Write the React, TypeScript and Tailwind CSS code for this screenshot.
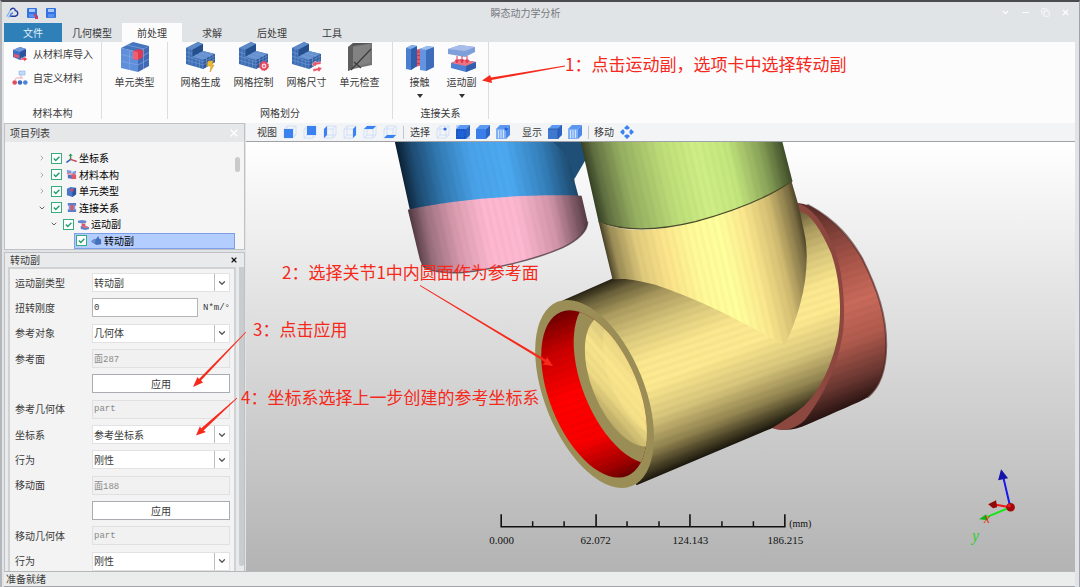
import { useState, type ReactNode } from "react";
import { ChevronDown, ChevronRight, Copy, Minus, X } from "lucide-react";

type Face = "front" | "back" | "left" | "right" | "top" | "bottom";

const FACES: Record<Face, string> = {
  front: "M1 4h9v9H1z",
  back: "M4 1h9v9H4z",
  left: "M1 4l3-3v9l-3 3z",
  right: "M10 4l3-3v9l-3 3z",
  top: "M1 4l3-3h9l-3 3z",
  bottom: "M1 13l3-3h9l-3 3z",
};

function WireCube({ face, dot }: { face?: Face; dot?: boolean }) {
  return (
    <svg viewBox="0 0 14 14" className="size-[14px]" aria-hidden="true">
      <path d="M1 4h9v9H1zM4 1h9v9H4zM1 4l3-3M10 4l3-3M1 13l3-3M10 13l3-3" fill="none" stroke="#c9dcfb" strokeWidth=".8" />
      {face && <path d={FACES[face]} fill="#3b82f0" />}
      {dot && <circle cx="9" cy="4" r="1.6" fill="#2f6fe0" />}
    </svg>
  );
}

function SolidCube({ kind }: { kind: "volume" | "plain" | "part" | "shaded" | "edges" }) {
  const light = kind === "part" || kind === "edges";
  const base = kind === "volume" ? "#1f62d8" : light ? "#7fb0f5" : kind === "shaded" ? "#3f78cf" : "#3b7eea";
  return (
    <svg viewBox="0 0 14 14" className="size-[14px]" aria-hidden="true">
      {kind === "volume" && <path d="M0 0h14v14H0z" fill="#b9d2f8" />}
      <path d="M0 4h10v10H0z" fill={base} />
      <path d="M0 4l4-4h10l-4 4z" fill={light ? "#5b97ee" : "#5b98f2"} />
      <path d="M10 4l4-4v10l-4 4z" fill={light ? "#4a87e6" : "#2a63c4"} />
      {light && <path d="M2.500 5v8M5 5v8M7.500 5v8" stroke="#d3e4fc" strokeWidth="1" />}
      {kind === "volume" && <path d="M1 5h8v8H1z" fill="none" stroke="#0d3f9c" strokeWidth=".8" strokeDasharray="1 1" />}
      {kind === "part" && <circle cx="10" cy="4" r="1.500" fill="#1f5fd0" />}
      {kind === "shaded" && <path d="M0 4h10v10M10 4l4-4" fill="none" stroke="#234f96" strokeWidth=".7" />}
    </svg>
  );
}

function MoveIcon() {
  return (
    <svg viewBox="0 0 14 14" className="size-[14px]" aria-hidden="true" fill="#3b82f0">
      <path d="M7 0l3 3-2 1.500H6L4 3zM7 14l3-3-2-1.500H6L4 11zM0 7l3-3 1.500 2v2L3 10zM14 7l-3-3-1.500 2v2l1.500 2z" />
    </svg>
  );
}

function ElementTypeIcon() {
  return (
    <svg viewBox="0 0 30 30" className="size-[30px]" aria-hidden="true">
      <path d="M1 6L13 0l16 4-11 6z" fill="#4475bd" />
      <path d="M1 6l17 4v20L1 26z" fill="#5f8edb" />
      <path d="M18 10l11-6v20l-11 6z" fill="#4169b4" />
      <path d="M1 12.500l17 4 11-6M1 19l17 4 11-6M9.500 8v20M23.500 7v20M7 3l17 4" stroke="#83a8e4" strokeWidth=".7" fill="none" />
      <path d="M13 9l5-2 5 1.200v7L18 18l-5-1z" fill="#d93c54" />
      <path d="M13 9l5 1v8l-5-1z" fill="#f2606f" />
    </svg>
  );
}

function MeshIcon({ badge }: { badge: "bolt" | "gear" | "size" }) {
  return (
    <svg viewBox="0 0 30 30" className="size-[30px]" aria-hidden="true">
      <path d="M0 6L12 0l5 2v7l12 3v8l-12 7L0 22z" fill="#3c6db2" />
      <path d="M0 6L12 0l5 2L6 8z" fill="#5d8ac8" />
      <path d="M6 8l11-6v7L6 15z" fill="#264f8d" />
      <path d="M6 15l11-6 12 3-12 6z" fill="#6792d0" />
      <path d="M17 18l12-6v8l-12 7z" fill="#2c5799" />
      <path d="M0 10l6 2M0 14l6 2 11 4 12-6M0 18l17 5 12-6M3 7v15M6 8v15M10 17v8M13.500 18v8M17 18v9M20.500 16v9M24 14v9M27 13v8M9 13l12 4M13 11l12 3" stroke="#7ea3d9" strokeWidth=".5" fill="none" />
      {badge === "bolt" && <path d="M22 19h5l-1 4h2l-4 7 1-6h-4z" fill="#efb92e" stroke="#c88d15" strokeWidth=".5" />}
      {badge === "gear" && (
        <g>
          <circle cx="25" cy="24" r="3.400" fill="#fbd6dc" stroke="#e5485f" strokeWidth="2" />
          <circle cx="25" cy="24" r="4.500" fill="none" stroke="#e5485f" strokeWidth="1" strokeDasharray="1.600 1.200" />
          <circle cx="25" cy="24" r="1" fill="#e5485f" />
        </g>
      )}
      {badge === "size" && (
        <g fill="#ec5367" stroke="#fff" strokeWidth=".4">
          <path d="M20 23l3-4 1 1.500 5-1v2.500l-5 1v1.500zM30 26l-3 4-1-1.500-5 1V27l5-1v-1.500z" />
        </g>
      )}
    </svg>
  );
}

function CheckElementIcon() {
  return (
    <svg viewBox="0 0 30 30" className="size-[30px]" aria-hidden="true">
      <path d="M3 5L8 1h19l-2 3z" fill="#555" />
      <path d="M3 5l5-1 19-3v22l-19 4-5 2z" fill="#757575" />
      <path d="M3 5l5-1v22l-5 3z" fill="#5e5e5e" />
      <path d="M8 5l17-3v19L8 25z" fill="#828282" />
      <path d="M6 28L26 7M9 20l7 6" stroke="#3d3d3d" strokeWidth="1.200" fill="none" />
    </svg>
  );
}

function ContactIcon() {
  return (
    <svg viewBox="0 0 30 30" className="size-[30px]" aria-hidden="true">
      <path d="M10 8l8-2v17l-8 2z" fill="#e35a6c" />
      <path d="M10 9l8 2M10 13l8 1M10 17l8 1M10 21l8 1" stroke="#b92f4a" strokeWidth=".8" />
      <path d="M1 6l6-3 5 1v20l-6 4-5-1z" fill="#4a7fd0" />
      <path d="M6 7l6-3v20l-6 4z" fill="#2e5da9" />
      <path d="M1 6l6-3 5 1-6 3z" fill="#86afe9" />
      <path d="M15 7l7-3 7 1v20l-8 4-6-1z" fill="#6394df" />
      <path d="M21 8l8-3v20l-8 4z" fill="#3c6cba" />
      <path d="M15 7l7-3 7 1-8 3z" fill="#9abdf0" />
    </svg>
  );
}

function JointIcon() {
  return (
    <svg viewBox="0 0 30 30" className="size-[30px]" aria-hidden="true">
      <path d="M1 7l12-4 15 2v5l-10 5L1 12z" fill="#7f9fdb" />
      <path d="M1 7l12-4 15 2-10 4z" fill="#a9bdea" />
      <path d="M4 21l9-4 16 3v6l-10 4-15-4z" fill="#4d80d3" />
      <path d="M4 21l9-4 16 3-10 4z" fill="#ec7482" />
      <path d="M19 24l10-4v6l-10 4z" fill="#315fae" />
      <path d="M10 14v5M15 14v5M20 14v5M8.500 18h3L10 21zM13.500 18h3L15 21zM18.500 18h3L20 21z" stroke="#e23750" fill="#e23750" strokeWidth="1" />
    </svg>
  );
}

function ImportMaterialIcon() {
  return (
    <svg viewBox="0 0 16 16" className="size-[16px]" aria-hidden="true">
      <path d="M1 4l7-3 6 2v7l-6 4-7-3z" fill="#3f6fc2" />
      <path d="M1 4l7-3 6 2-6 3z" fill="#6f98dc" />
      <path d="M8 6l6-3v7l-6 4z" fill="#2c549d" />
      <path d="M2 8l5 1v3l-5-1z" fill="#ee5468" />
      <path d="M9 12h3v-1.500l3.500 2.500-3.500 2.500V14H9z" fill="#ea4258" stroke="#fff" strokeWidth=".4" />
    </svg>
  );
}

function CustomMaterialIcon() {
  return (
    <svg viewBox="0 0 16 16" className="size-[16px]" aria-hidden="true">
      <path d="M7 1h6v4H7z" fill="#c3dbf8" stroke="#85b2ea" strokeWidth=".6" />
      <path d="M9 5v3M3 10l1-2h7" stroke="#ef9aa2" strokeWidth=".8" fill="none" />
      <circle cx="2.700" cy="12.500" r="2.300" fill="#e4495c" />
      <circle cx="8" cy="12.500" r="2.300" fill="#3c6cc0" />
      <circle cx="13.300" cy="12.500" r="2.300" fill="#4a86d9" />
    </svg>
  );
}

function AppLogo() {
  return (
    <svg viewBox="0 0 14 14" className="size-[13px]" aria-hidden="true" fill="none" strokeLinecap="round">
      <path d="M1 11l4-7M3 12l4-5" stroke="#7db0ee" strokeWidth="1.300" />
      <path d="M5 4c2-3 5-1 5 1 3 0 4 5 0 6H5" stroke="#2438a0" strokeWidth="1.500" />
      <path d="M5 11c-1-1 0-3 2-3" stroke="#4d7fd6" strokeWidth="1.300" />
    </svg>
  );
}

function SaveIcon({ marked }: { marked?: boolean }) {
  return (
    <svg viewBox="0 0 12 12" className="size-[12px]" aria-hidden="true">
      <rect x="1" y="1" width="10" height="10" rx="1" fill="#3473e2" />
      <path d="M3 2h6v3H3z" fill="#a9c8fa" />
      <path d="M3 7h6v3.500H3z" fill="#5b90ef" />
      {marked && <path d="M8 7l3 4M11.500 8.500v3H9" stroke="#e4364b" strokeWidth="1.300" fill="none" />}
    </svg>
  );
}

type TreeKind = "axis" | "material" | "element" | "link" | "joint" | "revolute";

function TreeIcon({ kind }: { kind: TreeKind }) {
  return (
    <svg viewBox="0 0 12 12" className="size-[11px] shrink-0" aria-hidden="true">
      {kind === "axis" && (
        <g fill="none" strokeWidth="1.600" strokeLinecap="round">
          <path d="M5 7V2" stroke="#2f9a50" />
          <path d="M5 7l-4 3" stroke="#2f5fb8" />
          <path d="M5 7l6 2" stroke="#c74a5c" />
          <path d="M3.500 3L5 1l1.500 2" stroke="#2f9a50" strokeWidth="1" />
        </g>
      )}
      {kind === "material" && (
        <g>
          <path d="M1 1l5 1v3l-5-1zM7 3l4-1v3l-4 1z" fill="#7c98d6" />
          <path d="M2 6l6 1v4l-6-1z" fill="#4b74c4" />
          <path d="M6 6h5v5H6z" fill="#e0576c" />
          <path d="M1 5l9 1" stroke="#e0576c" />
        </g>
      )}
      {kind === "element" && (
        <g>
          <path d="M1 3l4-2 6 1v7l-4 3-6-2z" fill="#4677c8" />
          <path d="M7 4l4-2v7l-4 3z" fill="#2c559e" />
          <path d="M5 3h3v3H5z" fill="#dc4860" />
        </g>
      )}
      {kind === "link" && (
        <g>
          <path d="M2 1h9v3H2zM2 8h9v3H2z" fill="#5a7fc9" />
          <path d="M3 4h7v4H3z" fill="#7d95cf" />
          <path d="M5 3h3v6H5z" fill="#df5169" />
        </g>
      )}
      {kind === "joint" && (
        <g>
          <path d="M0 2l4-1 5 1v2L5 5 0 4z" fill="#6487d0" />
          <path d="M4 5h4v3H4z" fill="#dc5269" />
          <path d="M3 8l4-1 5 2v2l-4 1-5-1z" fill="#5b7fcb" />
          <path d="M3 8l4-1 5 2-4 1z" fill="#df6d80" />
        </g>
      )}
      {kind === "revolute" && (
        <g>
          <path d="M0 7l4-3 1 1 3-4 1 3 2 1v5l-5 1-3-2z" fill="#4570bb" />
          <path d="M0 7l4-3 1 4-2 1z" fill="#6b8ed2" />
        </g>
      )}
    </svg>
  );
}

function RibbonButton({ icon, label, menu }: { icon: ReactNode; label: string; menu?: boolean }) {
  return (
    <button type="button" className="flex shrink-0 flex-col items-center">
      {icon}
      <span className="mt-[3px] leading-[14px]">{label}</span>
      {menu && (
        <svg viewBox="0 0 6 4" className="mt-[5px] h-[4px] w-[6px]" aria-hidden="true">
          <path d="M0 0h6L3 4z" fill="#333" />
        </svg>
      )}
    </button>
  );
}

function RibbonGroup({ label, width, children }: { label: string; width: string; children: ReactNode }) {
  return (
    <section className={`flex h-[77px] shrink-0 flex-col items-center justify-between border-r border-[#dcdddf] ${width}`}>
      <div className="flex w-full justify-center">{children}</div>
      <div className="h-[12px] leading-[12px]">{label}</div>
    </section>
  );
}

function TreeRow({ label, kind, indent, state, selected }: { label: string; kind: TreeKind; indent: string; state: "open" | "closed" | "leaf"; selected?: boolean }) {
  return (
    <li className={`flex items-center ${indent}`}>
      {state !== "leaf" && (
        <button type="button" aria-label={label} className="mr-[4px] flex w-[10px] shrink-0 justify-center">
          {state === "open" ? <ChevronDown size={8} strokeWidth={2.500} color="#444" /> : <ChevronRight size={8} color="#888" />}
        </button>
      )}
      <label className={`flex h-[16px] items-center ${selected ? "flex-1 border border-[#7c9fe6] bg-[#b3cdff] pl-[1px]" : ""}`}>
        <span className="grid shrink-0 place-items-center">
          <input type="checkbox" defaultChecked className="peer col-start-1 row-start-1 size-[11px] appearance-none border border-[#35ad7e] bg-white" />
          <svg viewBox="0 0 10 10" className="pointer-events-none invisible col-start-1 row-start-1 size-[9px] peer-checked:visible" aria-hidden="true">
            <path d="M2 5l2.200 2.200L8.200 3" fill="none" stroke="#1da06a" strokeWidth="1.500" />
          </svg>
        </span>
        <span className="ml-[4px] flex items-center gap-[2px]">
          <TreeIcon kind={kind} />
          {label}
        </span>
      </label>
    </li>
  );
}

function Row({ id, label, children }: { id?: string; label?: string; children: ReactNode }) {
  return (
    <div className="flex items-center px-[5px]">
      <label htmlFor={id} className="w-[77px] shrink-0">{label}</label>
      <div className="flex min-w-0 flex-1 items-center">{children}</div>
    </div>
  );
}

function SelectRow({ id, label, value }: { id: string; label: string; value: string }) {
  return (
    <Row id={id} label={label}>
      <div className="grid h-[19px] flex-1 grid-cols-[1fr_15px] border border-[#e2e2e2] bg-white">
        <select id={id} className="col-span-2 col-start-1 row-start-1 min-w-0 appearance-none bg-transparent pl-px leading-[16px] outline-none">
          <option>{value}</option>
        </select>
        <span className="pointer-events-none col-start-2 row-start-1 flex items-center justify-center border-l border-[#bdbdbd]">
          <ChevronDown size={10} strokeWidth={3} color="#555" />
        </span>
      </div>
    </Row>
  );
}

function ReadonlyRow({ id, label, value }: { id: string; label: string; value: string }) {
  return (
    <Row id={id} label={label}>
      <input id={id} readOnly defaultValue={value} className="h-[19px] w-full min-w-0 border border-[#e0e0e0] bg-[#f1f1f1] pl-[1px] font-['Liberation_Mono','Noto_Sans_CJK_SC',monospace] text-[9px] text-[#8a8a8a] outline-none" />
    </Row>
  );
}

function ApplyRow() {
  return (
    <Row>
      <button type="button" className="h-[19px] flex-1 border border-[#a9acb0] bg-white leading-[16px]">应用</button>
    </Row>
  );
}

const RIGHT_BAND = "M797 203C806 204 812 206 820 212C838 224 852 240 863 259C879 291 887 317 887 345C887 368 882 387 868 398C862 402 840 411 808 425C796 431 783 432 772 428L790 390L836 300Z";
const RIM = "M797 203C815 208 826 227 836 251C844 276 846 307 844 330C840 362 826 394 806 420C796 430 783 433 771 428L785 300Z";
const BODY = "M563 301L613 279L780 225L802 212C812 215 824 234 832 254C840 277 843 307 839 335C833 366 820 393 804 407C796 414 785 421 772 429L637 486Z";
const UPPER = "M599 222C625 234 660 232 700 221C740 210 770 197 792 181L799 205L806 238C809 258 807 282 801 304C796 322 791 335 785 346C740 320 695 298 655 285C639 281 626 278 613 280Z";
const GREEN = "M581 142H783L793 181C765 201 725 214 696 222C655 232 622 231 599 222Z";
const BLUE = "M395 142H553C560 148 566 154 570 163C573 171 575 178 575 182L579 197C510 195 455 201 410 210Z";
const PINK = "M408 210C452 200 520 194 582 196L588 222C588 232 577 241 563 248C538 259 494 270 463 273C446 274 426 272 422 265L420 260Z";

function Model() {
  return (
    <svg viewBox="246 142 830 430" preserveAspectRatio="xMidYMid slice" className="h-full w-full" role="img">
      <defs>
        <linearGradient id="body" gradientUnits="userSpaceOnUse" x1="563" y1="301" x2="641" y2="484">
          <stop offset="0" stopColor="#2a2414" /><stop offset=".06" stopColor="#6a603a" /><stop offset=".16" stopColor="#ac9c5f" />
          <stop offset=".3" stopColor="#dac87c" /><stop offset=".44" stopColor="#fbe78e" /><stop offset=".57" stopColor="#fde98f" />
          <stop offset=".73" stopColor="#d7c57b" /><stop offset=".87" stopColor="#91834f" /><stop offset="1" stopColor="#1c180d" />
        </linearGradient>
        <linearGradient id="upper" gradientUnits="userSpaceOnUse" x1="606" y1="250" x2="804" y2="204">
          <stop offset="0" stopColor="#4b4329" /><stop offset=".04" stopColor="#998a55" /><stop offset=".15" stopColor="#dfc97b" />
          <stop offset=".28" stopColor="#fbe38a" /><stop offset=".42" stopColor="#fff997" /><stop offset=".57" stopColor="#ffff9c" />
          <stop offset=".7" stopColor="#fbe78d" /><stop offset=".83" stopColor="#d3bd72" /><stop offset=".94" stopColor="#7c6e43" /><stop offset="1" stopColor="#292314" />
        </linearGradient>
        <linearGradient id="green" gradientUnits="userSpaceOnUse" x1="590" y1="185" x2="788" y2="139">
          <stop offset="0" stopColor="#333e22" /><stop offset=".06" stopColor="#627142" /><stop offset=".18" stopColor="#94ad60" />
          <stop offset=".38" stopColor="#bddd78" /><stop offset=".55" stopColor="#ceee86" /><stop offset=".7" stopColor="#c3e67d" />
          <stop offset=".86" stopColor="#87a057" /><stop offset="1" stopColor="#303c20" />
        </linearGradient>
        <linearGradient id="blue" gradientUnits="userSpaceOnUse" x1="402" y1="180" x2="577" y2="150">
          <stop offset="0" stopColor="#0b2033" /><stop offset=".08" stopColor="#1d4a70" /><stop offset=".22" stopColor="#3179b1" />
          <stop offset=".4" stopColor="#49a2e9" /><stop offset=".6" stopColor="#4ca9f1" /><stop offset=".8" stopColor="#347fba" /><stop offset="1" stopColor="#163a58" />
        </linearGradient>
        <linearGradient id="pink" gradientUnits="userSpaceOnUse" x1="412" y1="240" x2="589" y2="210">
          <stop offset="0" stopColor="#49333b" /><stop offset=".1" stopColor="#9b707e" /><stop offset=".25" stopColor="#d799ad" />
          <stop offset=".42" stopColor="#fdb7cf" /><stop offset=".6" stopColor="#fdb8d0" /><stop offset=".8" stopColor="#d093a8" /><stop offset="1" stopColor="#49333b" />
        </linearGradient>
        <linearGradient id="maroon" gradientUnits="userSpaceOnUse" x1="800" y1="218" x2="876" y2="402">
          <stop offset="0" stopColor="#5f302b" /><stop offset=".3" stopColor="#a95549" /><stop offset=".5" stopColor="#c96a5b" />
          <stop offset=".68" stopColor="#af5a4d" /><stop offset=".86" stopColor="#683630" /><stop offset="1" stopColor="#1b0c0b" />
        </linearGradient>
        <linearGradient id="bore" gradientUnits="userSpaceOnUse" x1="560" y1="312" x2="630" y2="480">
          <stop offset="0" stopColor="#6d0000" /><stop offset=".2" stopColor="#c90000" /><stop offset=".45" stopColor="#ff0000" />
          <stop offset=".72" stopColor="#f80000" /><stop offset=".9" stopColor="#a00000" /><stop offset="1" stopColor="#5b0000" />
        </linearGradient>
        <linearGradient id="hole" gradientUnits="userSpaceOnUse" x1="595" y1="320" x2="645" y2="447">
          <stop offset="0" stopColor="#81754a" /><stop offset=".2" stopColor="#bdad6b" /><stop offset=".5" stopColor="#f8e48b" />
          <stop offset=".65" stopColor="#efdb84" /><stop offset=".85" stopColor="#aa9a5e" /><stop offset="1" stopColor="#716640" />
        </linearGradient>
        <pattern id="facetsV" width="7" height="7" patternUnits="userSpaceOnUse" patternTransform="rotate(-13)">
          <path d="M0 0h3v7H0z" fill="#000" opacity=".02" />
        </pattern>
        <pattern id="facetsH" width="7" height="7" patternUnits="userSpaceOnUse" patternTransform="rotate(-18)">
          <path d="M0 0h7v3H0z" fill="#000" opacity=".025" />
        </pattern>
        <clipPath id="mouth"><ellipse cx="594.500" cy="394.500" rx="88.500" ry="44.500" transform="rotate(68 594.500 394.500)" /></clipPath>
      </defs>

      <path d="M548 142H582L586 160L575 179Z" fill="#1f4f76" />
      <path d={BLUE} fill="url(#blue)" /><path d={BLUE} fill="url(#facetsV)" />
      <path d={PINK} fill="url(#pink)" /><path d={PINK} fill="url(#facetsV)" />
      <path d="M422 265C426 272 446 274 463 273C494 270 538 259 563 248C577 241 588 232 588 222" fill="none" stroke="#3b2930" strokeWidth="1.500" opacity=".7" />

      <path d={RIGHT_BAND} fill="url(#maroon)" /><path d={RIGHT_BAND} fill="url(#facetsH)" />
      <path d="M808 205C838 221 852 240 863 259C879 291 887 317 887 345C887 368 882 387 868 398" fill="none" stroke="#4a221f" strokeWidth="2" opacity=".6" />
      <path d={RIM} fill="#8c473e" />
      <path d={BODY} fill="url(#body)" /><path d={BODY} fill="url(#facetsH)" />
      <path d={UPPER} fill="url(#upper)" /><path d={UPPER} fill="url(#facetsV)" />
      <path d={GREEN} fill="url(#green)" /><path d={GREEN} fill="url(#facetsV)" />
      <path d="M599 222C622 231 655 232 696 222C725 214 765 201 793 181" fill="none" stroke="#4b4c27" strokeWidth="1.300" />

      <ellipse cx="595" cy="394.500" rx="99.500" ry="50" transform="rotate(68 595 394.500)" fill="#9a8d55" />
      <g clipPath="url(#mouth)">
        <path d="M530 300h130v190H530z" fill="url(#bore)" /><path d="M530 300h130v190H530z" fill="url(#facetsH)" />
        <ellipse cx="627" cy="381" rx="88.500" ry="44.500" transform="rotate(68 627 381)" fill="#9a8d55" />
        <ellipse cx="627" cy="381" rx="70" ry="35" transform="rotate(68 627 381)" fill="url(#hole)" />
        <ellipse cx="627" cy="381" rx="70" ry="35" transform="rotate(68 627 381)" fill="url(#facetsH)" />
        <path d="M604 330C603 345 604 362 608 376C618 402 628 420 646 432V350Z" fill="#ffe98f" opacity=".4" />
      </g>

      <g stroke="#111" fill="none">
        <path d="M501.500 515V527.500H785.500V515M596.500 515v12M690.500 515v12" strokeWidth="1.600" />
        <path d="M533 522v5M564.500 522v5M627.500 522v5M659.500 522v5M722.500 522v5M754 522v5" strokeWidth="1.500" />
      </g>
      <g fill="#111" fontFamily="'Liberation Serif', serif" fontSize="11" textAnchor="middle">
        <text x="502" y="545">0.000</text>
        <text x="596" y="545">62.072</text>
        <text x="691" y="545">124.143</text>
        <text x="786" y="545">186.215</text>
        <text x="801" y="528" fontSize="10">(mm)</text>
      </g>

      <g strokeWidth="2" strokeLinecap="round">
        <path d="M1011 507L1004 477" stroke="#1717ef" />
        <path d="M1011 508L994 505" stroke="#ef1515" />
        <path d="M1011 508L987 518" stroke="#17e517" />
      </g>
      <path d="M1002 470L1009 479L999 481Z" fill="#1414a8" />
      <path d="M989 505L997 501L998 508L994 509Z" fill="#8f0909" />
      <path d="M980 520L987 515L989 521Z" fill="#12b512" />
      <circle cx="1011.500" cy="508" r="4.300" fill="#a50808" />
      <circle cx="1010" cy="506.500" r="1.700" fill="#e92020" />
      <g fontFamily="'Liberation Serif', serif" fontStyle="italic" fontSize="16">
        <text x="985" y="524" fill="#e23a20" fontSize="14">x</text>
        <text x="973" y="542" fill="#2fce2f">y</text>
      </g>
    </svg>
  );
}

const TABS = ["几何模型", "前处理", "求解", "后处理", "工具"];

export default function App() {
  const [tab, setTab] = useState("前处理");
  return (
    <div className="relative flex h-screen flex-col overflow-hidden border-t-2 border-r border-l-2 border-t-[#4a4b50] border-r-[#a0a3a8] border-l-[#b4b6b9] bg-[#e1e4e7] pr-[4px] pl-[2px] font-['Noto_Sans_CJK_SC',sans-serif] text-[10px] leading-[14px] text-[#3a3a3a]">
      <header className="grid h-[21px] shrink-0 grid-cols-[1fr_auto_1fr] items-center">
        <div className="flex items-center gap-[7px] pl-[2px]">
          <AppLogo />
          <button type="button" aria-label="保存"><SaveIcon marked /></button>
          <button type="button" aria-label="保存"><SaveIcon /></button>
        </div>
        <h1 className="mr-[28px] text-[#77797c]">瞬态动力学分析</h1>
        <div className="flex justify-end gap-[11px] pr-[5px] text-white">
          <ChevronDown size={9} strokeWidth={3} />
          <Minus size={9} strokeWidth={3} />
          <Copy size={9} />
          <X size={9} strokeWidth={3} />
        </div>
      </header>

      <nav className="flex h-[19px] shrink-0">
        <button type="button" className="w-[58px] bg-[#2f80b8] text-[#e6f1f8]">文件</button>
        {TABS.map((t) => (
          <button key={t} type="button" onClick={() => setTab(t)} className={`w-[60px] ${t === tab ? "bg-[#fcfcfc]" : ""}`}>{t}</button>
        ))}
      </nav>

      <div className="flex h-[81px] shrink-0 bg-[#fcfcfc]">
        <RibbonGroup label="材料本构" width="w-[98px]">
          <div className="flex flex-col gap-[8px] pt-[4px]">
            <button type="button" className="flex items-center gap-[5px]"><ImportMaterialIcon />从材料库导入</button>
            <button type="button" className="flex items-center gap-[5px]"><CustomMaterialIcon />自定义材料</button>
          </div>
        </RibbonGroup>
        <RibbonGroup label="" width="w-[66px]">
          <RibbonButton icon={<ElementTypeIcon />} label="单元类型" />
        </RibbonGroup>
        <RibbonGroup label="网格划分" width="w-[225px]">
          <div className="flex gap-[13px]">
            <RibbonButton icon={<MeshIcon badge="bolt" />} label="网格生成" />
            <RibbonButton icon={<MeshIcon badge="gear" />} label="网格控制" />
            <RibbonButton icon={<MeshIcon badge="size" />} label="网格尺寸" />
            <RibbonButton icon={<CheckElementIcon />} label="单元检查" />
          </div>
        </RibbonGroup>
        <RibbonGroup label="连接关系" width="w-[96px]">
          <div className="flex gap-[12px]">
            <RibbonButton icon={<ContactIcon />} label="接触" menu />
            <RibbonButton icon={<JointIcon />} label="运动副" menu />
          </div>
        </RibbonGroup>
      </div>

      <div className="flex min-h-0 flex-1">
        <aside className="flex w-[241px] shrink-0 flex-col gap-[2px]">
          <section className="shrink-0 border border-[#bfc1c4] bg-[#f5f5f6]">
            <header className="flex h-[18px] items-center justify-between bg-[#e6e7e9] pr-[4px] pl-[5px]">
              <h2>项目列表</h2>
              <X size={12} strokeWidth={2.500} color="#fff" />
            </header>
            <div className="flex justify-between pt-[8px] pr-[4px]">
              <ul className="grid h-[99px] flex-1 auto-rows-fr text-black">
                <TreeRow label="坐标系" kind="axis" indent="pl-[32px]" state="closed" />
                <TreeRow label="材料本构" kind="material" indent="pl-[32px]" state="closed" />
                <TreeRow label="单元类型" kind="element" indent="pl-[32px]" state="closed" />
                <TreeRow label="连接关系" kind="link" indent="pl-[32px]" state="open" />
                <TreeRow label="运动副" kind="joint" indent="pl-[44px]" state="open" />
                <TreeRow label="转动副" kind="revolute" indent="pl-[69px]" state="leaf" selected />
              </ul>
              <div className="mt-[7px] h-[15px] w-[5px] rounded-full bg-[#cacacb]" />
            </div>
          </section>

          <section className="flex min-h-0 flex-1 flex-col border border-b-0 border-[#bfc1c4] bg-[#e9eaeb]">
            <header className="flex h-[14px] shrink-0 items-center justify-between pr-[6px] pl-[5px]">
              <h2>转动副</h2>
              <X size={8} strokeWidth={3.500} color="#111" />
            </header>
            <div className="flex min-h-0 flex-1 gap-[3px] pl-[3px]">
              <form className="min-w-0 flex-1 overflow-hidden border-2 border-b-0 border-[#cfd1d3] bg-[#f3f3f3] pt-px" onSubmit={(e) => e.preventDefault()}>
                <div className="grid h-[304px] grid-rows-12">
                  <SelectRow id="joint-type" label="运动副类型" value="转动副" />
                  <Row id="stiffness" label="扭转刚度">
                    <input id="stiffness" defaultValue="0" className="h-[19px] w-[106px] border border-[#b3b5b8] bg-white pl-[1px] font-['Liberation_Mono',monospace] text-[9px] outline-none" />
                    <span className="ml-[5px] font-['Liberation_Mono',monospace] text-[9px] whitespace-nowrap">N*m/°</span>
                  </Row>
                  <SelectRow id="ref-object" label="参考对象" value="几何体" />
                  <ReadonlyRow id="ref-face" label="参考面" value="面287" />
                  <ApplyRow />
                  <ReadonlyRow id="ref-body" label="参考几何体" value="part" />
                  <SelectRow id="coordinate" label="坐标系" value="参考坐标系" />
                  <SelectRow id="ref-behavior" label="行为" value="刚性" />
                  <ReadonlyRow id="move-face" label="移动面" value="面188" />
                  <ApplyRow />
                  <ReadonlyRow id="move-body" label="移动几何体" value="part" />
                  <SelectRow id="move-behavior" label="行为" value="刚性" />
                </div>
              </form>
              <div className="mb-[5px] w-[5px] rounded-b-full bg-[#cacbcd]" />
            </div>
          </section>
        </aside>

        <main className="flex min-w-0 flex-1 flex-col pl-[1px]">
          <div className="flex h-[18px] shrink-0 items-center bg-[#f3f4f5] pl-[11px]">
            <span>视图</span>
            <div className="ml-[6px] flex gap-[6px]">
              <WireCube face="front" />
              <WireCube face="back" />
              <WireCube face="left" />
              <WireCube face="right" />
              <WireCube face="top" />
              <WireCube face="bottom" />
            </div>
            <span className="ml-[6px] h-[13px] w-px bg-[#c3c5c8]" />
            <span className="ml-[6px]">选择</span>
            <div className="ml-[6px] flex gap-[6px]">
              <WireCube dot />
              <SolidCube kind="volume" />
              <SolidCube kind="plain" />
              <SolidCube kind="part" />
            </div>
            <span className="ml-[12px]">显示</span>
            <div className="ml-[6px] flex gap-[6px]">
              <SolidCube kind="shaded" />
              <SolidCube kind="edges" />
            </div>
            <span className="ml-[6px] h-[13px] w-px bg-[#c3c5c8]" />
            <span className="mr-[6px] ml-[5px]">移动</span>
            <MoveIcon />
          </div>
          <div className="min-h-0 flex-1 border-t border-[#9fa1a4] bg-linear-to-b from-white to-[#b3b3b3]">
            <Model />
          </div>
        </main>
      </div>

      <footer className="flex h-[16px] shrink-0 items-center border-t border-b border-t-[#b5b7ba] border-b-[#a0a3a8] bg-[#ebecec] pl-[2px]">准备就绪</footer>

      <div className="pointer-events-none absolute -top-[2px] -left-[2px] h-[587px] w-[1080px] text-[17px] leading-[24px] whitespace-nowrap text-[#f5291c]">
        <svg viewBox="0 0 1080 587" className="absolute inset-0 h-[587px] w-[1080px]" aria-hidden="true" fill="#f5291c">
          <path d="M565 65.500L491 77.500L490 75L482 80.500L492 83L491.500 80L565 66.500Z" />
          <path d="M420 285L546 359.800L547 357L553 366L542.500 364.500L545 362L420 286Z" />
          <path d="M246 331.500L199 379L197.500 377L193 387L203 382.500L201 380.500L246 332.500Z" />
          <path d="M237 397.500L201 428.500L200 426L196 435.500L206 432L203.500 430.500L237 398.500Z" />
        </svg>
        <p className="absolute top-[52px] left-[565px]">1：点击运动副，选项卡中选择转动副</p>
        <p className="absolute top-[260px] left-[282px]">2：选择关节1中内圆面作为参考面</p>
        <p className="absolute top-[317px] left-[253px]">3：点击应用</p>
        <p className="absolute top-[385px] left-[241px]">4：坐标系选择上一步创建的参考坐标系</p>
      </div>
    </div>
  );
}
